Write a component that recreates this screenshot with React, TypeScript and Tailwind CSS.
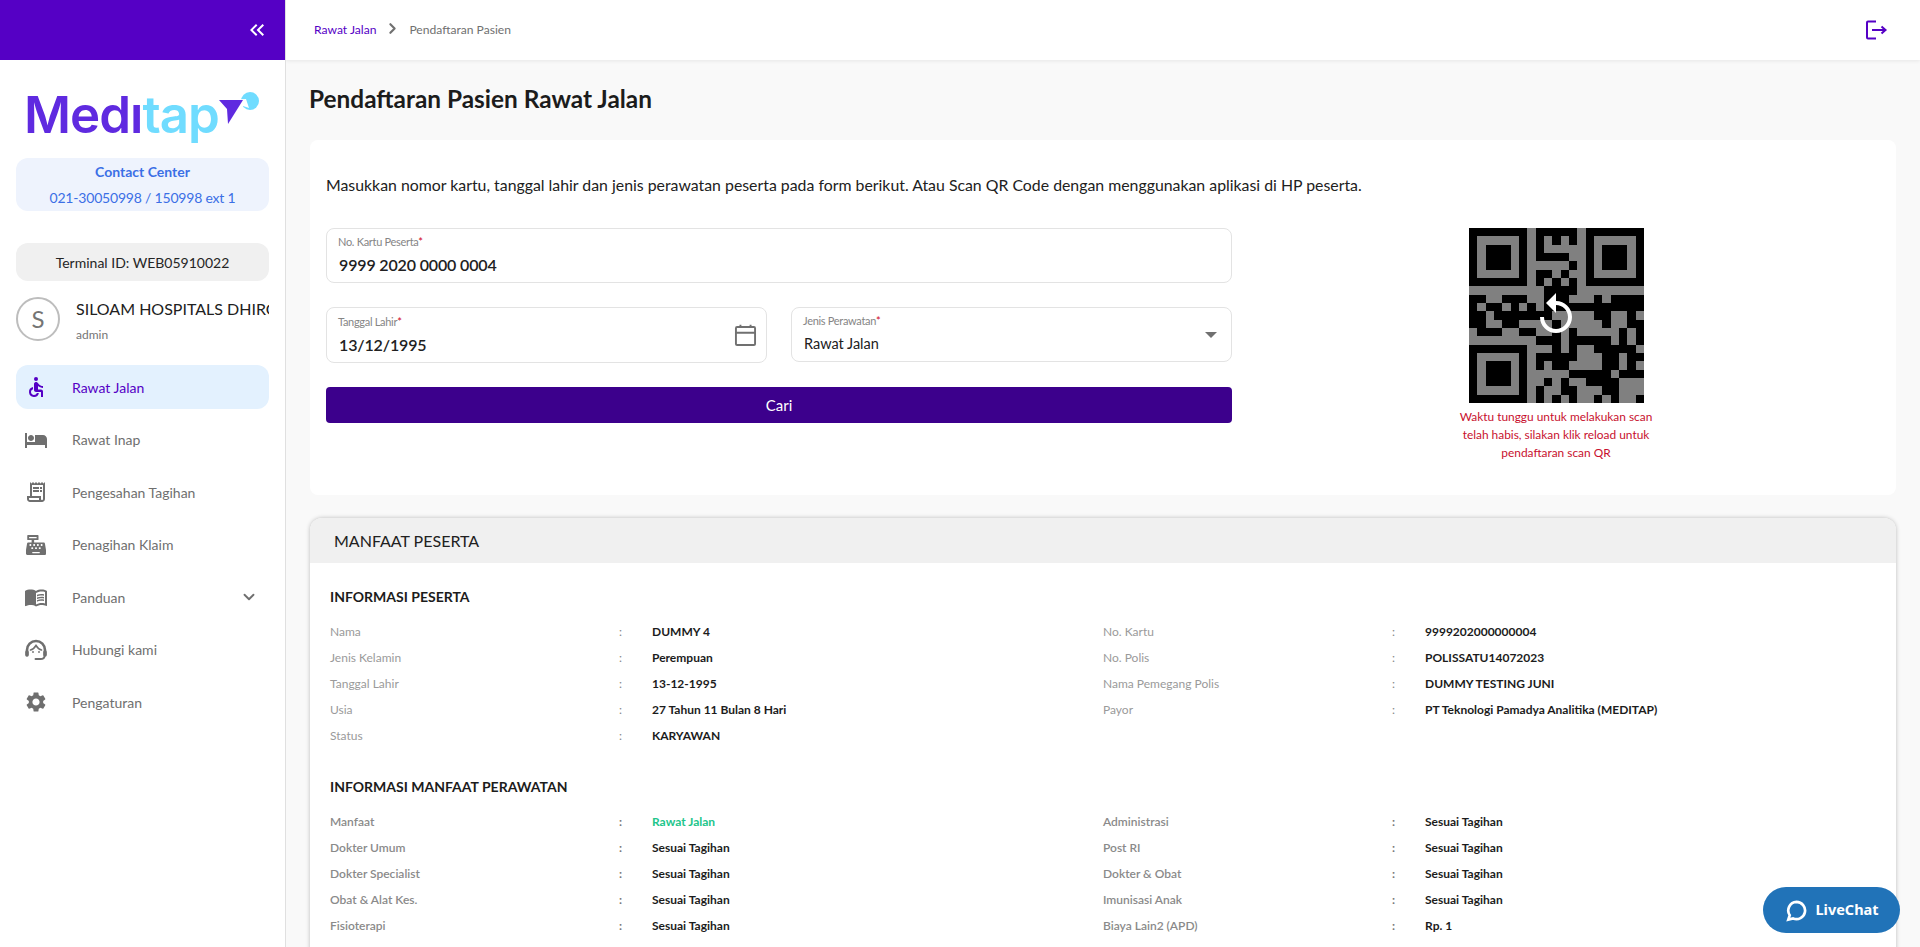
import { ChevronRight, ChevronDown } from "lucide-react"
import { FaCashRegister } from "react-icons/fa"
import {
  MdAccessible,
  MdHotel,
  MdKeyboardDoubleArrowLeft,
  MdMenuBook,
  MdOutlineReceiptLong,
  MdReplay,
  MdSettings,
} from "react-icons/md"

const qrRows = [
  "#######.#####.#######",
  "#.....#.#.#.#.#.....#",
  "#.###.#.#.....#.###.#",
  "#.###.#.####..#.###.#",
  "#.###.#.....#.#.###.#",
  "#.....#.##.#..#.....#",
  "#######.#.#.#.#######",
  ".........####........",
  "##..###..###...#.####",
  "#.##.#.#.############",
  "##.#######.....##..#.",
  "##..##....#.....#..##",
  ".###..##..#.#.....#.#",
  "........###.#####.#.#",
  "#######...#.#..#####.",
  "#.....#.#####...##.##",
  "#.###.#.#.##....##.#.",
  "#.###.#.....#####.###",
  "#.###.#..#.#..####...",
  "#.....#.#..##...##...",
  "#######.#.#.#..#.#..#",
]

function HeadsetIcon() {
  return (
    <svg viewBox="0 0 24 24" className="w-[24px] h-[24px]" fill="none" stroke="currentColor" strokeLinecap="round">
      <path d="M3 17v-5a9 9 0 0 1 18 0v5" strokeWidth="2.600" />
      <path d="M3 14v3M21 14v3" strokeWidth="3.600" />
      <path d="M6.500 12c2.500-.5 4-2 5.500-4.500 1.500 2.500 3 4 5.500 4.500" strokeWidth="1.600" />
      <path d="M20.500 18c0 2-1.500 3-4 3h-5" strokeWidth="1.900" />
      <circle cx="9" cy="14" r="0.9" fill="currentColor" stroke="none" />
      <circle cx="15" cy="14" r="0.9" fill="currentColor" stroke="none" />
    </svg>
  )
}

function Logo() {
  return (
    <div className="relative h-[62px] mt-[24px] mb-[12px] ml-[24px] flex items-start">
      <span className="font-['Inter'] font-semibold text-[51px] leading-[62px] tracking-[-1px] text-[#5f2ae0]">Medı</span>
      <span className="font-['Inter'] font-semibold text-[51px] leading-[62px] tracking-[-1px] text-[#70dcff]">tap</span>
      <svg viewBox="0 0 44 36" className="absolute left-[195px] top-[6px] w-[44px] h-[36px]">
        <circle cx="31" cy="11" r="9" fill="#70dcff" />
        <path d="M0 10 L27 9 L30 18 L24 16 L9 34 L8 19 Z" fill="#ffffff" />
        <path d="M0 10 L24 10 L9 34 L8 19 Z" fill="#5f2ae0" />
      </svg>
    </div>
  )
}

function NavItem({ icon, label, active, chevron }: { icon: React.ReactNode; label: string; active?: boolean; chevron?: boolean }) {
  return (
    <div
      className={
        active
          ? "h-[44px] rounded-xl bg-[#e3f1fe] flex items-center text-[#5500c5]"
          : "h-[44px] rounded-xl flex items-center text-[#6f6f6f]"
      }
    >
      <div className="w-[40px] mr-[16px] flex justify-center shrink-0">{icon}</div>
      <span className="text-[14px] flex-1">{label}</span>
      {chevron && <ChevronDown className="w-[18px] h-[18px] mr-[11px]" strokeWidth={2.5} />}
    </div>
  )
}

function Sidebar() {
  return (
    <aside className="w-[286px] shrink-0 h-full bg-white border-r border-[#e0e0e0] flex flex-col">
      <div className="h-[60px] bg-[#5500c5] flex items-center justify-end pr-[16px] text-white">
        <MdKeyboardDoubleArrowLeft className="w-[24px] h-[24px]" />
      </div>
      <Logo />
      <div className="mx-[16px] h-[53px] rounded-xl bg-[#eef3fd] text-center text-[#3b6fe6] text-[14px] tracking-[-0.2px] flex flex-col justify-center gap-[5px] leading-[21px]">
        <div className="font-bold tracking-normal">Contact Center</div>
        <div>021-30050998 / 150998 ext 1</div>
      </div>
      <div className="mx-[16px] mt-[32px] h-[38px] rounded-xl bg-[#f0f0f0] flex items-center justify-center text-[14px] text-[#252525]">
        Terminal ID: WEB05910022
      </div>
      <div className="mx-[16px] mt-[16px] flex">
        <div className="w-[44px] h-[44px] rounded-full border-2 border-[#bdbdbd] flex items-center justify-center text-[24px] text-[#757575] shrink-0">
          S
        </div>
        <div className="ml-[16px] overflow-hidden">
          <div className="text-[16px] text-[#212121] whitespace-nowrap leading-[24px]">SILOAM HOSPITALS DHIROTSAHA</div>
          <div className="text-[12px] text-[#757575] mt-[5px] leading-[18px]">admin</div>
        </div>
      </div>
      <nav className="mx-[16px] mt-[21px] flex flex-col gap-[8.500px]">
        <NavItem active label="Rawat Jalan" icon={<MdAccessible className="w-[24px] h-[24px]" />} />
        <NavItem label="Rawat Inap" icon={<MdHotel className="w-[24px] h-[24px]" />} />
        <NavItem label="Pengesahan Tagihan" icon={<MdOutlineReceiptLong className="w-[24px] h-[24px]" />} />
        <NavItem label="Penagihan Klaim" icon={<FaCashRegister className="w-[20px] h-[20px]" />} />
        <NavItem chevron label="Panduan" icon={<MdMenuBook className="w-[24px] h-[24px]" />} />
        <NavItem label="Hubungi kami" icon={<HeadsetIcon />} />
        <NavItem label="Pengaturan" icon={<MdSettings className="w-[24px] h-[24px]" />} />
      </nav>
    </aside>
  )
}

function FieldLabel({ text }: { text: string }) {
  return (
    <div className="-ml-px text-[11px] leading-[14px] tracking-[-0.3px] text-[#858585]">
      {text}
      <span className="text-[#d0021b]">*</span>
    </div>
  )
}

function QrCode() {
  return (
    <div className="relative w-[175px] h-[175px]">
      <svg viewBox="0 0 21 21" className="w-[175px] h-[175px]" shapeRendering="crispEdges">
        <rect width="21" height="21" fill="#808080" />
        {qrRows.map((row, y) =>
          row.split("").map((c, x) => (c === "#" ? <rect key={x + "-" + y} x={x} y={y} width="1" height="1" fill="#000" /> : null))
        )}
      </svg>
      <MdReplay className="absolute left-[63px] top-[63px] w-[48px] h-[48px] text-white" />
    </div>
  )
}

function InfoRow({ label, value, strong, green }: { label: string; value: string; strong?: boolean; green?: boolean }) {
  return (
    <div className="flex h-[26px] items-center text-[12px]">
      <div className={strong ? "w-[289px] font-semibold text-[#8a8a8a]" : "w-[289px] text-[#9a9a9a]"}>{label}</div>
      <div className={strong ? "w-[33px] font-bold text-[#777777]" : "w-[33px] text-[#888888]"}>:</div>
      <div className={green ? "font-bold text-[#22c58b]" : "font-bold text-[#1c1c1c]"}>{value}</div>
    </div>
  )
}

const pesertaLeft = [
  ["Nama", "DUMMY 4"],
  ["Jenis Kelamin", "Perempuan"],
  ["Tanggal Lahir", "13-12-1995"],
  ["Usia", "27 Tahun 11 Bulan 8 Hari"],
  ["Status", "KARYAWAN"],
]
const pesertaRight = [
  ["No. Kartu", "9999202000000004"],
  ["No. Polis", "POLISSATU14072023"],
  ["Nama Pemegang Polis", "DUMMY TESTING JUNI"],
  ["Payor", "PT Teknologi Pamadya Analitika (MEDITAP)"],
]
const manfaatLeft = [
  ["Manfaat", "Rawat Jalan"],
  ["Dokter Umum", "Sesuai Tagihan"],
  ["Dokter Specialist", "Sesuai Tagihan"],
  ["Obat & Alat Kes.", "Sesuai Tagihan"],
  ["Fisioterapi", "Sesuai Tagihan"],
]
const manfaatRight = [
  ["Administrasi", "Sesuai Tagihan"],
  ["Post RI", "Sesuai Tagihan"],
  ["Dokter & Obat", "Sesuai Tagihan"],
  ["Imunisasi Anak", "Sesuai Tagihan"],
  ["Biaya Lain2 (APD)", "Rp. 1"],
]

export default function App() {
  return (
    <div className="h-screen overflow-hidden flex bg-[#f9f9f9] font-['Lato',sans-serif] text-[#212121]">
      <Sidebar />

      <div className="flex-1 h-full overflow-hidden flex flex-col">
        {/* Top bar */}
        <header className="h-[60px] shrink-0 bg-white shadow-[0_1px_4px_rgba(0,0,0,0.08)] flex items-center pl-[28px] pr-[32px] text-[12.100px]">
          <span className="text-[#5500c5]">Rawat Jalan</span>
          <ChevronRight className="w-[17px] h-[17px] text-[#707070] mx-[8px] -mt-[4px]" strokeWidth={3} />
          <span className="text-[#707070]">Pendaftaran Pasien</span>
          <svg viewBox="0 0 24 24" className="ml-auto w-[24px] h-[24px] text-[#5500c5]" fill="none" stroke="currentColor" strokeWidth="2">
            <path d="M12 3.500H4a1 1 0 0 0-1 1v15a1 1 0 0 0 1 1h8" />
            <path d="M8 12h13M17.500 8.500l4 3.500-4 3.500" />
          </svg>
        </header>

        <main className="px-[24px]">
          <h1 className="h-[80px] -ml-px flex items-center text-[24.400px] font-bold text-[#1c1c1c] pb-[2px]">Pendaftaran Pasien Rawat Jalan</h1>

          {/* Search card */}
          <section className="h-[355px] bg-white rounded-lg pt-[33px] px-[16px]">
            <p className="text-[15.850px] leading-[24px] text-[#212121]">
              Masukkan nomor kartu, tanggal lahir dan jenis perawatan peserta pada form berikut. Atau Scan QR Code dengan menggunakan aplikasi di HP peserta.
            </p>
            <div className="flex mt-[31px]">
              <div className="w-[906px] shrink-0">
                <div className="h-[55px] border border-[#e3e3e3] rounded-lg px-[12px] flex flex-col justify-center">
                  <FieldLabel text="No. Kartu Peserta" />
                  <div className="text-[16px] tracking-[-0.15px] font-semibold leading-[22px] mt-[5px]">9999 2020 0000 0004</div>
                </div>
                <div className="flex gap-[24px] mt-[24px]">
                  <div className="w-[441px] h-[56px] border border-[#e3e3e3] rounded-lg px-[12px] flex items-center justify-between">
                    <div>
                      <FieldLabel text="Tanggal Lahir" />
                      <div className="text-[16px] tracking-[-0.15px] font-semibold leading-[22px] mt-[5px]">13/12/1995</div>
                    </div>
                    <svg viewBox="0 0 24 24" className="w-[27px] h-[27px] -mr-[5px] text-[#707070]" fill="none" stroke="currentColor" strokeWidth="1.700">
                      <rect x="3.500" y="4.500" width="17" height="16" rx="1" />
                      <path d="M3.500 9.500h17M7.500 2.500v2M16.500 2.500v2" />
                    </svg>
                  </div>
                  <div className="flex-1 h-[55px] border border-[#e3e3e3] rounded-lg px-[12px] flex items-center justify-between">
                    <div>
                      <FieldLabel text="Jenis Perawatan" />
                      <div className="text-[14.500px] leading-[22px] mt-[5px]">Rawat Jalan</div>
                    </div>
                    <div className="w-0 h-0 border-l-[6px] border-r-[6px] border-t-[6px] border-l-transparent border-r-transparent border-t-[#707070] mr-[2px]" />
                  </div>
                </div>
                <button className="w-full h-[36px] mt-[24px] rounded bg-[#3c008c] text-white text-[15px]">Cari</button>
              </div>

              <div className="flex-1 flex flex-col items-center">
                <QrCode />
                <p className="w-[220px] mt-[5px] text-center text-[11.900px] leading-[18px] text-[#c8102e]">
                  Waktu tunggu untuk melakukan scan telah habis, silakan klik reload untuk pendaftaran scan QR
                </p>
              </div>
            </div>
          </section>

          {/* Manfaat card */}
          <section className="mt-[23px] bg-white rounded-t-xl shadow-[0_0_4px_rgba(0,0,0,0.25)] overflow-hidden">
            <div className="h-[45px] bg-[#f0f0f0] flex items-center pl-[24px] text-[16px] text-[#212121]">MANFAAT PESERTA</div>
            <div className="px-[20px] pt-[23px] pb-[40px]">
              <h3 className="text-[14px] font-bold leading-[22px] text-[#1c1c1c]">INFORMASI PESERTA</h3>
              <div className="grid grid-cols-2 mt-[11px]">
                <div>{pesertaLeft.map((r) => <InfoRow key={r[0]} label={r[0]} value={r[1]} />)}</div>
                <div>{pesertaRight.map((r) => <InfoRow key={r[0]} label={r[0]} value={r[1]} />)}</div>
              </div>
              <h3 className="mt-[27px] text-[14px] font-bold leading-[22px] text-[#1c1c1c]">INFORMASI MANFAAT PERAWATAN</h3>
              <div className="grid grid-cols-2 mt-[11px]">
                <div>{manfaatLeft.map((r, i) => <InfoRow key={r[0]} strong green={i === 0} label={r[0]} value={r[1]} />)}</div>
                <div>{manfaatRight.map((r) => <InfoRow key={r[0]} strong label={r[0]} value={r[1]} />)}</div>
              </div>
            </div>
          </section>
        </main>
      </div>

      {/* LiveChat */}
      <div className="fixed left-[1763px] top-[887px] w-[137px] h-[46px] rounded-full bg-[#2173b8] text-white flex items-center justify-center gap-[8px] font-['Noto_Sans',sans-serif] font-bold text-[14.500px]">
        <svg viewBox="0 0 24 24" className="w-[23px] h-[23px]" fill="none" stroke="currentColor" strokeWidth="2.800">
          <path d="M13 3a9 9 0 1 1-3.500 17.300L4.500 21.500l1.500-4.500A9 9 0 0 1 13 3z" />
        </svg>
        LiveChat
      </div>
    </div>
  )
}
